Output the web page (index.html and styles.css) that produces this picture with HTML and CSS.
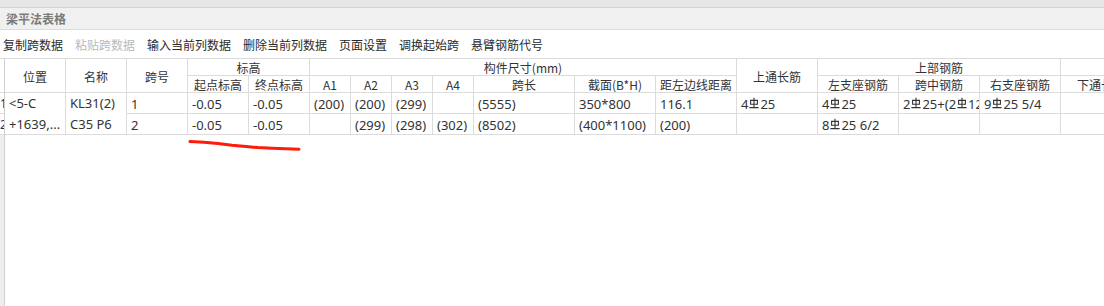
FILE: index.html
```html
<!DOCTYPE html>
<html lang="zh">
<head>
<meta charset="utf-8">
<link rel="stylesheet" href="styles.css">
</head>
<body>
<div class="app">
  <div class="topstrip"></div>
  <div class="titlebar">梁平法表格</div>
  <div class="toolbar">
    <span class="tb">复制跨数据</span>
    <span class="tb disabled">粘贴跨数据</span>
    <span class="tb">输入当前列数据</span>
    <span class="tb">删除当前列数据</span>
    <span class="tb">页面设置</span>
    <span class="tb">调换起始跨</span>
    <span class="tb">悬臂钢筋代号</span>
  </div>
  <div class="sheet">
    <div class="grid">
      <div class="h rh rs2"></div>
      <div class="h rs2">位置</div>
      <div class="h rs2">名称</div>
      <div class="h rs2">跨号</div>
      <div class="h cs2">标高</div>
      <div class="h cs7">构件尺寸(mm)</div>
      <div class="h rs2">上通长筋</div>
      <div class="h cs3">上部钢筋</div>
      <div class="h cs3">下部钢筋</div>

      <div class="h">起点标高</div>
      <div class="h">终点标高</div>
      <div class="h">A1</div>
      <div class="h">A2</div>
      <div class="h">A3</div>
      <div class="h">A4</div>
      <div class="h">跨长</div>
      <div class="h">截面(B*H)</div>
      <div class="h">距左边线距离</div>
      <div class="h">左支座钢筋</div>
      <div class="h">跨中钢筋</div>
      <div class="h">右支座钢筋</div>
      <div class="h">下通长筋</div>
      <div class="h">左支座钢筋</div>
      <div class="h">跨中钢筋</div>

      <div class="d rh">1</div>
      <div class="d rs2 multi"><span>&lt;5-C</span><span>+1639,...</span></div>
      <div class="d rs2 multi"><span>KL31(2)</span><span>C35 P6</span></div>
      <div class="d">1</div>
      <div class="d">-0.05</div>
      <div class="d">-0.05</div>
      <div class="d">(200)</div>
      <div class="d">(200)</div>
      <div class="d">(299)</div>
      <div class="d"></div>
      <div class="d">(5555)</div>
      <div class="d">350*800</div>
      <div class="d">116.1</div>
      <div class="d">4<svg class="bar" viewBox="0 0 10 12"><path d="M5 0.8V10.6M1.6 3.4H8.4V7.2H1.6ZM0.4 10.6H9.6"/></svg>25</div>
      <div class="d">4<svg class="bar" viewBox="0 0 10 12"><path d="M5 0.8V10.6M1.6 3.4H8.4V7.2H1.6ZM0.4 10.6H9.6"/></svg>25</div>
      <div class="d">2<svg class="bar" viewBox="0 0 10 12"><path d="M5 0.8V10.6M1.6 3.4H8.4V7.2H1.6ZM0.4 10.6H9.6"/></svg>25+(2<svg class="bar" viewBox="0 0 10 12"><path d="M5 0.8V10.6M1.6 3.4H8.4V7.2H1.6ZM0.4 10.6H9.6"/></svg>12</div>
      <div class="d">9<svg class="bar" viewBox="0 0 10 12"><path d="M5 0.8V10.6M1.6 3.4H8.4V7.2H1.6ZM0.4 10.6H9.6"/></svg>25 5/4</div>
      <div class="d"></div>
      <div class="d"></div>
      <div class="d"></div>

      <div class="d rh cur">2</div>
      <div class="d">2</div>
      <div class="d">-0.05</div>
      <div class="d">-0.05</div>
      <div class="d"></div>
      <div class="d">(299)</div>
      <div class="d">(298)</div>
      <div class="d">(302)</div>
      <div class="d">(8502)</div>
      <div class="d">(400*1100)</div>
      <div class="d">(200)</div>
      <div class="d"></div>
      <div class="d">8<svg class="bar" viewBox="0 0 10 12"><path d="M5 0.8V10.6M1.6 3.4H8.4V7.2H1.6ZM0.4 10.6H9.6"/></svg>25 6/2</div>
      <div class="d"></div>
      <div class="d"></div>
      <div class="d"></div>
      <div class="d"></div>
      <div class="d"></div>
    </div>
    <div class="filler"></div>
  </div>
  <svg class="mark" width="1104" height="306" viewBox="0 0 1104 306">
    <path d="M190 141.6 L204 142.2 L218 143.4 L232 145.2 L246 146.6 L258 147.6 L272 148.2 L286 148.8 L299 149.2"/>
  </svg>
</div>
</body>
</html>
```

FILE: styles.css
```css
* { box-sizing: border-box; }
html, body { margin: 0; padding: 0; }
body {
  width: 1104px;
  height: 306px;
  overflow: hidden;
  background: #ffffff;
  font-family: "Noto Sans", "Noto Sans CJK SC", sans-serif;
  color: #333333;
}
.app {
  position: relative;
  display: flex;
  flex-direction: column;
  height: 306px;
  overflow: hidden;
}
.topstrip {
  height: 8px;
  flex: none;
  background: #e6e6e6;
  border-bottom: 1px solid #d4d4d4;
}
.titlebar {
  height: 22px;
  flex: none;
  background: #f0f0f0;
  border-bottom: 1px solid #dcdcdc;
  padding-left: 6px;
  font-family: "Noto Sans CJK SC", sans-serif;
  font-size: 12px;
  font-weight: bold;
  color: #7b7b7b;
  line-height: 21px;
}
.toolbar {
  height: 28px;
  flex: none;
  display: flex;
  align-items: center;
  gap: 12px;
  padding-left: 3px;
  padding-top: 1px;
  font-family: "Noto Sans CJK SC", sans-serif;
  font-size: 12px;
  color: #2a2a2a;
}
.tb.disabled { color: #b9b9b9; }
.sheet {
  flex: 1;
  display: flex;
  flex-direction: column;
  min-height: 0;
}
.grid {
  display: grid;
  width: max-content;
  grid-template-columns: 5px repeat(5, 61px) repeat(4, 41px) 101px repeat(9, 81px);
  grid-template-rows: 17px 17px 21px 21px;
  border-top: 1px solid #dadada;
  flex: none;
}
.h, .d {
  border-right: 1px solid #dcdcdc;
  border-bottom: 1px solid #dcdcdc;
  overflow: hidden;
  white-space: nowrap;
}
.h {
  display: flex;
  align-items: center;
  justify-content: center;
  padding-top: 2px;
  font-family: "Noto Sans CJK SC", sans-serif;
  font-size: 12px;
  line-height: 14px;
  color: #333333;
}
.d {
  display: flex;
  align-items: center;
  padding-left: 4px;
  padding-top: 1px;
  font-size: 13px;
  line-height: 20px;
  color: #333333;
}
.rs2 { grid-row: span 2; }
.cs2 { grid-column: span 2; }
.cs3 { grid-column: span 3; }
.cs7 { grid-column: span 7; }
.rh {
  padding-left: 0;
  border-right-color: #cfcfcf;
}
.d.rh { font-size: 12px; color: #1e2a66; }
.multi {
  flex-direction: column;
  align-items: flex-start;
  justify-content: flex-start;
  padding-top: 0;
  line-height: 20.5px;
}
.bar {
  width: 10px;
  height: 12px;
  margin: 0 1px 0 1px;
  flex: none;
  position: relative;
  top: -1px;
}
.bar path {
  fill: none;
  stroke: #333333;
  stroke-width: 1.1;
}
.filler {
  flex: 1;
  width: 5px;
  background: #eeeeee;
  border-right: 1px solid #d2d2d2;
}
.mark {
  position: absolute;
  left: 0;
  top: 0;
  pointer-events: none;
}
.mark path {
  fill: none;
  stroke: #ff1a0a;
  stroke-width: 3;
  stroke-linecap: round;
  stroke-linejoin: round;
}
```
